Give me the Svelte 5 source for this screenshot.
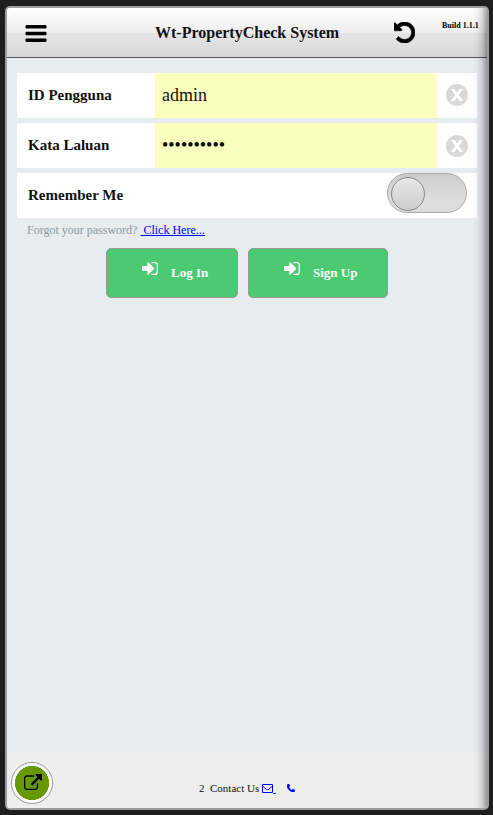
<script>
  const signIn =
    'M1184 896q0 26-19 45l-544 544q-19 19-45 19t-45-19-19-45v-288h-448q-26 0-45-19t-19-45v-384q0-26 19-45t45-19h448v-288q0-26 19-45t45-19 45 19l544 544q19 19 19 45zm352-352v704q0 119-84.5 203.5t-203.5 84.5h-320q-13 0-22.5-9.5t-9.5-22.5q0-4-1-20t-.5-26.5 3-23.5 10-19.5 20.5-6.5h320q66 0 113-47t47-113v-704q0-66-47-113t-113-47h-320q-13 0-22.5-9.5t-9.5-22.5q0-4-1-20t-.5-26.5 3-23.5 10-19.5 20.5-6.5h320q119 0 203.5 84.5t84.5 203.5z';
  const undo =
    'M1664 896q0 156-61 298t-164 245-245 164-298 61q-172 0-327-72.5t-264-204.5q-7-10-6.5-22.5t8.5-20.5l137-138q10-9 25-9 16 2 23 12 73 95 179 147t225 52q104 0 198.5-40.5t163.5-109.5 109.5-163.5 40.5-198.5-40.5-198.5-109.5-163.5-163.5-109.5-198.5-40.5q-98 0-188 35.5t-160 101.5l137 138q31 30 14 69-17 40-59 40h-448q-26 0-45-19t-19-45v-448q0-42 40-59 39-17 69 14l130 129q107-101 244.5-156.5t284.5-55.5q156 0 298 61t245 164 164 245 61 298z';
  const external =
    'M1408 928v320q0 119-84.5 203.5t-203.5 84.5h-832q-119 0-203.5-84.5t-84.5-203.5v-832q0-119 84.5-203.5t203.5-84.5h704q14 0 23 9t9 23v64q0 14-9 23t-23 9h-704q-66 0-113 47t-47 113v832q0 66 47 113t113 47h832q66 0 113-47t47-113v-320q0-14 9-23t23-9h64q14 0 23 9t9 23zm384-864v512q0 26-19 45t-45 19-45-19l-176-176-652 652q-10 10-23 10t-23-10l-114-114q-10-10-10-23t10-23l652-652-176-176q-19-19-19-45t19-45 45-19h512q26 0 45 19t19 45z';
  const phone =
    'M1600 1240q0 27-10 70.5t-21 68.5q-21 50-122 106-94 51-186 51-27 0-53-3.5t-57.5-12.5-47-14.5-55.5-20.5-49-18q-98-35-175-83-127-79-264-216t-216-264q-48-77-83-175-3-9-18-49t-20.5-55.5-14.5-47-12.5-57.5-3.5-53q0-92 51-186 56-101 106-122 25-11 68.5-21t70.5-10q14 0 21 3 18 6 53 76 11 19 30 54t35 63.5 31 53.5q3 4 17.5 25t21.5 35.5 7 28.5q0 20-28.5 50t-62 55-62 53-28.5 46q0 9 5 22.5t8.5 20.5 14 24 11.5 19q76 137 174 235t235 174q2 1 19 11.5t24 14 20.5 8.5 22.5 5q18 0 46-28.5t53-62 55-62 50-28.5q14 0 28.5 7t35.5 21.5 25 17.5q25 15 53.5 31t63.5 35 54 30q70 35 76 53 3 7 3 21z';

  const fields = [
    { label: 'ID Pengguna', type: 'text', value: 'admin' },
    { label: 'Kata Laluan', type: 'password', value: '••••••••••' }
  ];
  const buttons = [
    { label: 'Log In', width: 132 },
    { label: 'Sign Up', width: 140 }
  ];
</script>

<div class="stage">
  <div class="frame">
    <header>
      <svg class="menu" width="22" height="20" viewBox="0 0 22 20" aria-label="Menu">
        <rect x="0.5" y="2" width="21" height="3.5" rx="1" />
        <rect x="0.5" y="8.7" width="21" height="3.5" rx="1" />
        <rect x="0.5" y="15.5" width="21" height="3.5" rx="1" />
      </svg>
      <h1>Wt-PropertyCheck System</h1>
      <svg class="undo" width="21" height="21" viewBox="128 128 1536 1536" aria-label="Reload"><path d={undo} stroke="#000" stroke-width="50" /></svg>
      <span class="build">Build 1.1.1</span>
    </header>

    <main>
      {#each fields as field, i}
        <div class="row">
          <span class="label">{field.label}</span>
          <span class="input" class:secret={field.type === 'password'}>{field.value}</span>
          <svg class="clear" class:lower={i === 1} width="22" height="22" viewBox="0 0 22 22">
            <circle cx="11" cy="11" r="11" fill="#d9d9d9" />
            <path d="M5 5H8.600L11 8.800L13.400 5H17L12.900 11L17.300 17H13.600L11 13.200L8.400 17H4.700L9.100 11Z" fill="#fff" />
          </svg>
        </div>
      {/each}
      <div class="row">
        <span class="label">Remember Me</span>
        <div class="toggle"><div class="knob"></div></div>
      </div>

      <p class="forgot">Forgot your password? <span class="link">&nbsp;Click Here...</span></p>

      <div class="actions">
        {#each buttons as button}
          <div class="button" style="width: {button.width}px">
            <svg width="16" height="13" viewBox="0 256 1536 1280" preserveAspectRatio="none"><path d={signIn} fill="#fff" /></svg>
            <span>{button.label}</span>
          </div>
        {/each}
      </div>
    </main>

    <footer>
      <span class="contact">2&nbsp; Contact Us</span>
      <span class="mail">
        <svg width="11" height="9" viewBox="0 0 11 9"><path d="M.5 .5H10.5V8.5H.5ZM.5 2L4.5 5.5Q5.5 6 6.5 5.5L10.5 2" fill="none" stroke="#00f" /></svg><u>&nbsp;</u>
      </span>
      <svg class="phone" width="8" height="8" viewBox="192 128 1408 1408"><path d={phone} fill="#00f" stroke="#00f" stroke-width="80" /></svg>
    </footer>

    <div class="fab">
      <svg width="18" height="16" viewBox="0 0 1792 1536" preserveAspectRatio="none"><path d={external} /></svg>
    </div>
    <div class="shade"></div>
  </div>
</div>

<style>
  :global(body) {
    background: #1e1e1e;
  }
  .stage {
    box-sizing: border-box;
    width: 493px;
    height: 815px;
    padding: 6px 0 0 5px;
    background: #1e1e1e;
    font-family: 'Liberation Serif', 'Times New Roman', serif;
    color: #111;
  }
  .frame {
    position: relative;
    box-sizing: border-box;
    width: 484px;
    height: 804px;
    border: 2px solid #9d9d9d;
    border-radius: 5px;
    overflow: hidden;
    background: #e7ecef;
    display: flex;
    flex-direction: column;
  }
  header {
    box-sizing: border-box;
    flex: none;
    display: flex;
    align-items: flex-start;
    height: 50px;
    border-bottom: 1px solid #555;
    background: linear-gradient(#fff 0%, #eee 50%, #e4e4e4 51%, #d8d8d8 100%);
  }
  .menu {
    margin: 15px 0 0 18px;
  }
  h1 {
    margin: 15px 0 0 108px;
    width: 184px;
    font-size: 16px;
    line-height: 20px;
    white-space: nowrap;
    text-shadow: 0 1px 0 #eee;
  }
  .undo {
    margin: 14px 0 0 55px;
  }
  .build {
    margin: 13px 0 0 27px;
    font-size: 8px;
    line-height: 10px;
    font-weight: bold;
    color: #000;
    white-space: nowrap;
  }
  main {
    flex: 1;
    padding: 15px 10px 0;
  }
  .row {
    display: flex;
    align-items: center;
    height: 45px;
    margin-bottom: 5px;
    background: #fff;
  }
  .label {
    box-sizing: border-box;
    width: 138px;
    padding-left: 11px;
    font-size: 15px;
    font-weight: bold;
    white-space: nowrap;
  }
  .input {
    box-sizing: border-box;
    width: 282px;
    height: 45px;
    padding-left: 7px;
    background: #faffbd;
    font-size: 18px;
    line-height: 45px;
  }
  .secret {
    color: #000;
  }
  .clear {
    margin: -1px 0 0 9px;
  }
  .lower {
    margin-top: 1px;
  }
  .toggle {
    box-sizing: border-box;
    width: 80px;
    height: 40px;
    margin: -5px 0 0 232px;
    padding: 3px;
    border: 1px solid #aaa;
    border-radius: 20px;
    background: linear-gradient(#ccc, #ddd 60%);
  }
  .knob {
    box-sizing: border-box;
    width: 34px;
    height: 34px;
    border: 1px solid #888;
    border-radius: 50%;
    background: linear-gradient(#e8e8e8, #ccc);
  }
  .forgot {
    margin: 0 0 0 10px;
    font-size: 12px;
    line-height: 14px;
    color: #8c9a9e;
    white-space: nowrap;
  }
  .link {
    color: #00f;
    text-decoration: underline;
  }
  .actions {
    display: flex;
    justify-content: center;
    gap: 10px;
    margin-top: 11px;
  }
  .button {
    box-sizing: border-box;
    display: flex;
    height: 50px;
    padding-left: 35px;
    border: 1px solid #999;
    border-radius: 5px;
    background: #4bca72;
    color: #fff;
    font-size: 13px;
    font-weight: bold;
  }
  .button svg {
    margin-top: 13px;
  }
  .button span {
    margin: 16px 0 0 13px;
    line-height: 16px;
    white-space: nowrap;
  }
  footer {
    flex: none;
    box-sizing: border-box;
    display: flex;
    align-items: flex-start;
    height: 55px;
    padding: 28px 0 0 192px;
    background: #eee;
    font-size: 11px;
    line-height: 14px;
  }
  .mail {
    display: flex;
    margin-left: 3px;
    color: #00f;
  }
  .mail svg {
    margin-top: 3px;
  }
  .phone {
    margin: 3px 0 0 11px;
  }
  .fab {
    position: absolute;
    left: 4px;
    bottom: 4px;
    box-sizing: border-box;
    width: 42px;
    height: 42px;
    border: 1px solid #999;
    border-radius: 50%;
    background: radial-gradient(circle, #690 0 16.8px, #fff 17.3px);
  }
  .fab svg {
    display: block;
    margin: 11px 0 0 12px;
  }
  .shade {
    position: absolute;
    top: 0;
    right: 0;
    bottom: 0;
    width: 14px;
    background: linear-gradient(to right, rgba(0, 0, 0, 0), rgba(0, 0, 0, 0.04) 35%, rgba(0, 0, 0, 0.13) 65%, rgba(0, 0, 0, 0.36));
  }
</style>
